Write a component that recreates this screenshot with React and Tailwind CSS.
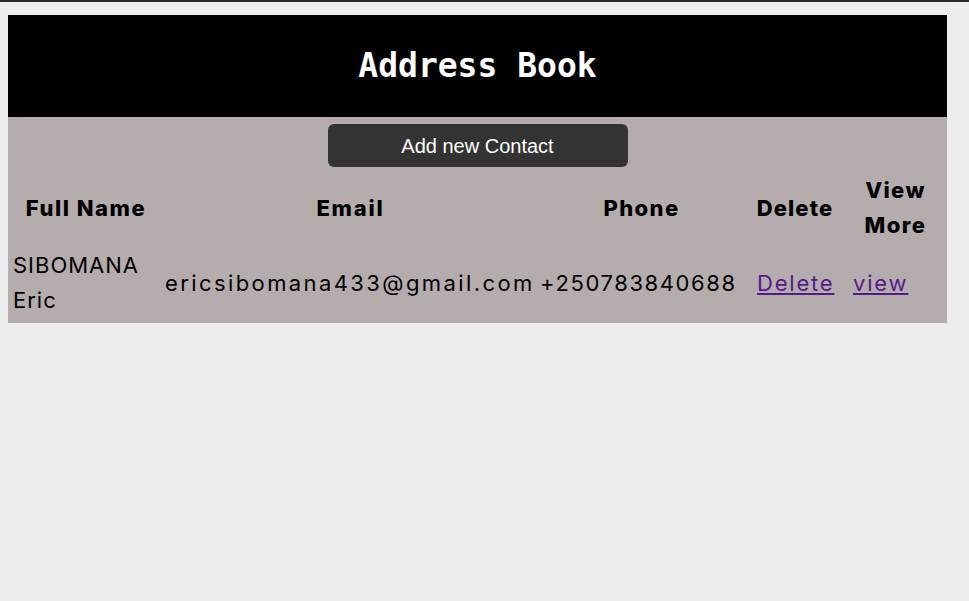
export default function App() {
  const contacts = [
    {
      name: "SIBOMANA Eric",
      email: "ericsibomana433@gmail.com",
      phone: "+250783840688",
    },
  ];

  return (
    <div className="min-h-screen bg-[#ededed] border-t-2 border-[#2a2a2a] pt-[13px] pl-2">
      <div className="w-[939px]">
        {/* Header */}
        <div className="h-[102px] bg-black flex items-center justify-center">
          <h1 className="text-white text-[33px] font-bold font-['DejaVu_Sans_Mono',monospace]">
            Address Book
          </h1>
        </div>

        {/* Contacts */}
        <div className="bg-[#b5adad] pt-[7px] pb-[2px] font-['Inter',sans-serif] text-black">
          <div className="flex justify-center">
            <button className="w-[300px] h-[43px] rounded-md bg-[#333333] text-white text-[20px] font-['Liberation_Sans',Arial,sans-serif]">
              Add new Contact
            </button>
          </div>

          <table className="mt-[3px] w-full table-fixed border-separate border-spacing-[2px] text-[22px] leading-[35px] tracking-[1.8px]">
            <colgroup>
              <col className="w-[152px]" />
              <col className="w-[373px]" />
              <col className="w-[205px]" />
              <col className="w-[98px]" />
              <col />
            </colgroup>
            <thead>
              <tr>
                <th className="p-px font-extrabold tracking-[1.5px]">Full Name</th>
                <th className="p-px font-extrabold tracking-[1.8px]">Email</th>
                <th className="p-px font-extrabold tracking-[1.4px]">Phone</th>
                <th className="p-px font-extrabold tracking-[1.1px]">Delete</th>
                <th className="p-px font-extrabold tracking-[1.4px]">View More</th>
              </tr>
            </thead>
            <tbody>
              {contacts.map((c) => (
                <tr key={c.email}>
                  <td className="p-px pt-[2px] pl-[3px] tracking-[1px]">{c.name}</td>
                  <td className="p-px pt-[2px] tracking-[2.4px]">{c.email}</td>
                  <td className="p-px pt-[2px] tracking-[1.6px]">{c.phone}</td>
                  <td className="p-px pt-[2px] pl-[11px]">
                    <a href="#" className="text-[#551a8b] underline">
                      Delete
                    </a>
                  </td>
                  <td className="p-px pt-[2px] pl-[7px]">
                    <a href="#" className="text-[#551a8b] underline">
                      view
                    </a>
                  </td>
                </tr>
              ))}
            </tbody>
          </table>
        </div>
      </div>
    </div>
  );
}
